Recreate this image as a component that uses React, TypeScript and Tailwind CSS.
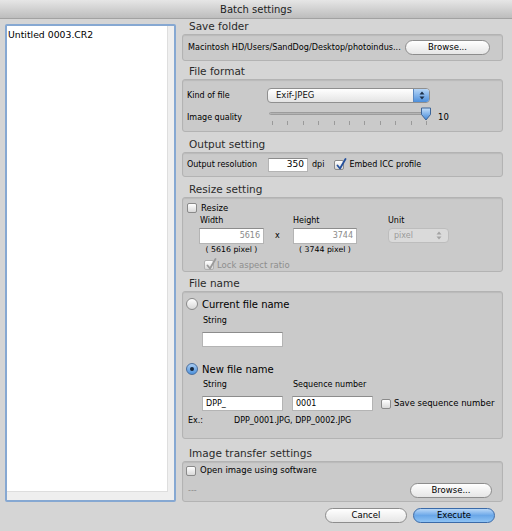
import React from "react";

const font = { fontFamily: '"DejaVu Sans", Verdana, sans-serif' };

const Check: React.FC<{ color: string }> = ({ color }) => (
  <svg className="absolute left-[1px] top-[-3px]" width="11" height="12" viewBox="0 0 11 12">
    <path d="M1.5 7.5 L4 10.5 L9.5 1" fill="none" stroke={color} strokeWidth="1.8" strokeLinecap="round" strokeLinejoin="round" />
  </svg>
);

const Checkbox: React.FC<{ checked?: boolean; disabled?: boolean }> = ({ checked, disabled }) => (
  <span
    className={
      "relative inline-block w-[10px] h-[10px] shrink-0 rounded-[2px] border bg-linear-to-b from-white to-[#d9d9d9] " +
      (disabled ? "border-[#b0b0b0]" : "border-[#8a8a8a]")
    }
  >
    {checked && <Check color={disabled ? "#9a9a9a" : "#24509c"} />}
  </span>
);

const Radio: React.FC<{ selected?: boolean }> = ({ selected }) =>
  selected ? (
    <span className="flex items-center justify-center w-[12px] h-[12px] shrink-0 rounded-full border border-[#4a6f9e] bg-linear-to-b from-[#a9cdf3] to-[#4d92dc]">
      <span className="w-[4px] h-[4px] rounded-full bg-[#16263a]" />
    </span>
  ) : (
    <span className="w-[12px] h-[12px] shrink-0 rounded-full border border-[#8a8a8a] bg-linear-to-b from-white to-[#d8d8d8]" />
  );

const Button: React.FC<{ label: string; primary?: boolean; className?: string }> = ({ label, primary, className }) => (
  <span
    className={
      "flex items-center justify-center h-[15px] rounded-full border text-[8.5px] text-black " +
      (primary
        ? "border-[#3a6aa8] bg-linear-to-b from-[#b9d8f7] via-[#6aa7e8] to-[#8ec3f4]"
        : "border-[#8d8d8d] bg-linear-to-b from-white via-[#f2f2f2] to-[#e6e6e6]") +
      " " +
      (className ?? "")
    }
  >
    {label}
  </span>
);

const Field: React.FC<{ value?: string; right?: boolean; dim?: boolean; className?: string }> = ({ value, right, dim, className }) => (
  <span
    className={
      "flex items-center bg-white border border-[#b4b4b4] border-t-[#8c8c8c] px-[3px] text-[8px] " +
      (right ? "justify-end " : "") +
      (dim ? "text-[#8a8a8a] " : "text-black ") +
      (className ?? "")
    }
  >
    {value}
  </span>
);

const Arrows: React.FC<{ color: string }> = ({ color }) => (
  <svg width="6" height="9" viewBox="0 0 6 9">
    <path d="M3 0.5 L5.5 3.5 H0.5 Z" fill={color} />
    <path d="M3 8.5 L5.5 5.5 H0.5 Z" fill={color} />
  </svg>
);

const Heading: React.FC<{ text: string; h: string }> = ({ text, h }) => (
  <div className={"flex items-end pl-[7px] pb-[1px] text-[10.5px] leading-[13px] text-[#2a2a2a] " + h}>{text}</div>
);

const Box: React.FC<{ h: string; className?: string; children: React.ReactNode }> = ({ h, className, children }) => (
  <div
    className={
      "rounded-[3px] border border-[#b3b3b3] bg-[#cacaca] shadow-[inset_0_1px_1px_rgba(0,0,0,0.08)] " + h + " " + (className ?? "")
    }
  >
    {children}
  </div>
);

export default function App() {
  return (
    <div className="w-[512px] h-[531px] bg-[#d5d5d5] flex flex-col overflow-hidden text-black" style={font}>
      {/* title bar */}
      <div className="h-[19px] shrink-0 flex items-center justify-center bg-linear-to-b from-[#e6e6e6] to-[#bdbdbd] border-b border-[#a2a2a2] text-[10px] text-[#222]">
        Batch settings
      </div>

      <div className="flex flex-1">
        {/* file list */}
        <div className="ml-[5px] mt-[5px] w-[171px] h-[478px] rounded-[2px] border-2 border-[#86a8d2] bg-[#efefef]">
          <div className="w-[161px] h-[466px] bg-white border-r border-b border-[#dedede] pl-[1px] pt-[3px] text-[9.3px] leading-[12px]">
            Untitled 0003.CR2
          </div>
        </div>

        {/* settings */}
        <div className="ml-[6px] w-[321px] flex flex-col">
          <Heading text="Save folder" h="h-[15px]" />
          <Box h="h-[27px]" className="flex items-center pl-[5px] pr-[12px]">
            <span className="text-[8.1px] whitespace-nowrap">Macintosh HD/Users/SandDog/Desktop/photoindus...</span>
            <Button label="Browse..." className="ml-auto w-[85px]" />
          </Box>

          <Heading text="File format" h="h-[18px]" />
          <Box h="h-[53px]" className="flex flex-col pl-[4px] pt-[8px]">
            <div className="flex items-center h-[15px]">
              <span className="w-[80px] text-[8px]">Kind of file</span>
              <span className="flex items-center w-[163px] h-[15px] rounded-[4px] border border-[#8f8f8f] bg-linear-to-b from-white to-[#e4e4e4] overflow-hidden">
                <span className="flex-1 pl-[8px] text-[8.5px] text-[#111]">Exif-JPEG</span>
                <span className="flex items-center justify-center w-[16px] h-full border-l border-[#5a87c0] bg-linear-to-b from-[#b6d6f7] to-[#4c8fdc]">
                  <Arrows color="#1c2f48" />
                </span>
              </span>
            </div>
            <div className="flex items-center mt-[6px] h-[17px]">
              <span className="w-[80px] text-[8px]">Image quality</span>
              <div className="relative w-[163px] h-[17px]">
                <div className="absolute left-[2px] right-[2px] top-[3px] h-[3px] rounded-full bg-linear-to-b from-[#8d8d8d] to-[#dcdcdc] border border-[#9c9c9c]" />
                <div className="absolute left-[5px] right-[3px] bottom-[1px] flex justify-between">
                  {Array.from({ length: 11 }).map((_, i) => (
                    <span key={i} className="w-px h-[4px] bg-[#9a9a9a]" />
                  ))}
                </div>
                <svg className="absolute right-[-2px] top-[-2px]" width="12" height="14" viewBox="0 0 12 14">
                  <defs>
                    <linearGradient id="thumb" x1="0" y1="0" x2="0" y2="1">
                      <stop offset="0" stopColor="#c6e0fa" />
                      <stop offset="1" stopColor="#3f86d8" />
                    </linearGradient>
                  </defs>
                  <path d="M1.5 1 H10.5 V7.5 L6 13 L1.5 7.5 Z" fill="url(#thumb)" stroke="#3d6598" strokeWidth="1" strokeLinejoin="round" />
                </svg>
              </div>
              <span className="ml-[8px] text-[8.5px]">10</span>
            </div>
          </Box>

          <Heading text="Output setting" h="h-[20px]" />
          <Box h="h-[25px]" className="flex items-center pl-[4px]">
            <span className="w-[81px] text-[8px]">Output resolution</span>
            <Field value="350" right className="w-[40px] h-[14px] text-[9px]" />
            <span className="ml-[4px] text-[8px]">dpi</span>
            <span className="ml-[10px] flex items-center">
              <Checkbox checked />
            </span>
            <span className="ml-[5px] text-[8px]">Embed ICC profile</span>
          </Box>

          <Heading text="Resize setting" h="h-[20px]" />
          <Box h="h-[75px]" className="flex flex-col pl-[4px] pt-[5px]">
            <div className="flex items-center h-[10px]">
              <Checkbox />
              <span className="ml-[4px] text-[8.5px]">Resize</span>
            </div>
            <div className="flex pl-[12px] mt-[1px]">
              <div className="w-[94px] flex flex-col">
                <span className="pl-[1px] text-[8px] leading-[13px]">Width</span>
                <div className="flex items-center mt-[1px]">
                  <Field value="5616" right dim className="w-[65px] h-[16px] text-[8.5px]" />
                  <span className="ml-[11px] text-[8px]">x</span>
                </div>
                <span className="w-[65px] text-center text-[7.8px] leading-[11px]">( 5616 pixel )</span>
              </div>
              <div className="w-[95px] flex flex-col">
                <span className="text-[8px] leading-[13px]">Height</span>
                <Field value="3744" right dim className="mt-[1px] w-[64px] h-[16px] text-[8.5px]" />
                <span className="w-[64px] text-center text-[7.8px] leading-[11px]">( 3744 pixel )</span>
              </div>
              <div className="flex flex-col">
                <span className="text-[8px] leading-[13px]">Unit</span>
                <span className="mt-[1px] flex items-center justify-between w-[61px] h-[15px] rounded-[4px] border border-[#bdbdbd] bg-[#dadada] pl-[5px] pr-[6px] text-[8px] text-[#9a9a9a]">
                  pixel
                  <Arrows color="#a3a3a3" />
                </span>
              </div>
            </div>
            <div className="flex items-center pl-[17px] mt-[4px]">
              <Checkbox checked disabled />
              <span className="ml-[3px] text-[8.5px] text-[#8e8e8e]">Lock aspect ratio</span>
            </div>
          </Box>

          <Heading text="File name" h="h-[19px]" />
          <Box h="h-[148px]" className="flex flex-col pl-[3px] pt-[5px]">
            <div className="flex items-center h-[14px]">
              <Radio />
              <span className="ml-[4px] text-[10px]">Current file name</span>
            </div>
            <span className="ml-[17px] mt-[4px] text-[8px] leading-[11px]">String</span>
            <Field className="ml-[16px] mt-[6px] w-[81px] h-[15px]" />
            <div className="flex items-center h-[14px] mt-[15px]">
              <Radio selected />
              <span className="ml-[4px] text-[10px]">New file name</span>
            </div>
            <div className="flex mt-[3px] text-[8px] leading-[11px]">
              <span className="ml-[17px] w-[90px]">String</span>
              <span>Sequence number</span>
            </div>
            <div className="flex items-center mt-[6px]">
              <Field value="DPP_" className="ml-[16px] w-[81px] h-[15px] text-[8.5px]" />
              <Field value="0001" className="ml-[9px] w-[81px] h-[15px] text-[8.5px]" />
              <span className="ml-[8px] flex items-center">
                <Checkbox />
              </span>
              <span className="ml-[3px] text-[8.5px]">Save sequence number</span>
            </div>
            <div className="flex mt-[4px] text-[8px] leading-[11px]">
              <span className="ml-[2px] w-[46px]">Ex.:</span>
              <span>DPP_0001.JPG, DPP_0002.JPG</span>
            </div>
          </Box>

          <Heading text="Image transfer settings" h="h-[22px]" />
          <Box h="h-[41px]" className="flex flex-col pl-[3px] pt-[3px] pr-[10px]">
            <div className="flex items-center h-[11px]">
              <Checkbox />
              <span className="ml-[4px] text-[8.5px]">Open image using software</span>
            </div>
            <div className="flex items-center mt-[7px]">
              <span className="ml-[2px] text-[8px] text-[#8a8a8a]">---</span>
              <Button label="Browse..." className="ml-auto w-[82px]" />
            </div>
          </Box>

          <div className="flex justify-end gap-[6px] pr-[8px] pt-[6px]">
            <Button label="Cancel" className="w-[82px]" />
            <Button label="Execute" primary className="w-[82px]" />
          </div>
        </div>
      </div>
    </div>
  );
}
